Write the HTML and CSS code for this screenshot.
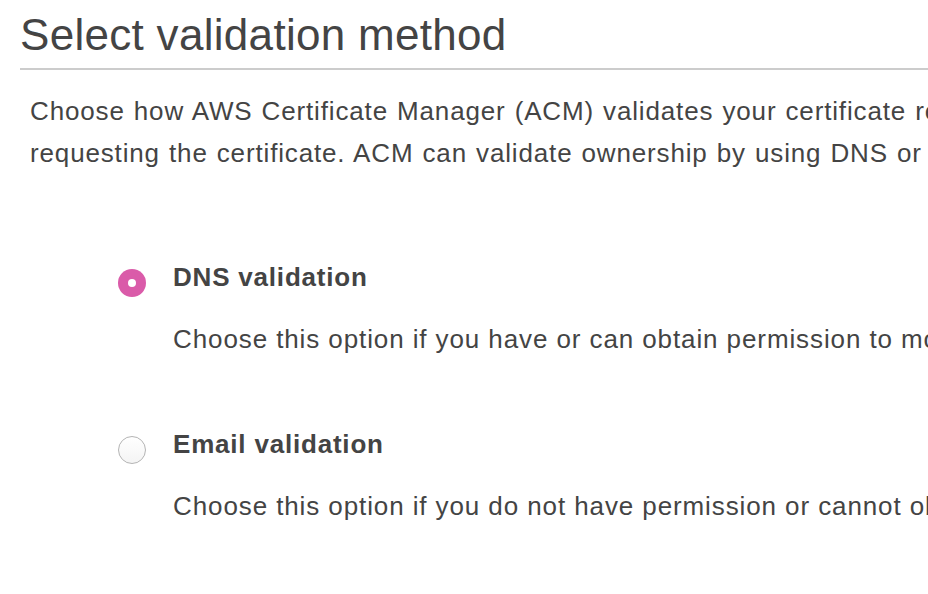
FILE: index.html
```html
<!DOCTYPE html>
<html>
<head>
<meta charset="utf-8">
<link rel="stylesheet" href="styles.css">
</head>
<body>
<div class="page">
  <h1 class="title">Select validation method</h1>
  <div class="divider"></div>
  <p class="intro">Choose how AWS Certificate Manager (ACM) validates your certificate requests. Before issuing a certificate, ACM must verify that you own or control the domains you are<br>requesting the certificate. ACM can validate ownership by using DNS or by sending email to the contact addresses of the domain owner.</p>
  <div class="options">
    <div class="option">
      <span class="radio radio-checked"><span class="dot"></span></span>
      <div class="text">
        <div class="label">DNS validation</div>
        <div class="desc">Choose this option if you have or can obtain permission to modify the DNS configuration for the domains in your certificate request.</div>
      </div>
    </div>
    <div class="option">
      <span class="radio"></span>
      <div class="text">
        <div class="label">Email validation</div>
        <div class="desc">Choose this option if you do not have permission or cannot obtain permission to modify the DNS configuration for the domains in your certificate request.</div>
      </div>
    </div>
  </div>
</div>
</body>
</html>
```
FILE: styles.css
```css
html, body {
  margin: 0;
  padding: 0;
  background: #fff;
  overflow: hidden;
}
.page {
  width: 928px;
  height: 594px;
  overflow: hidden;
  font-family: "Liberation Sans", Arial, sans-serif;
  color: #444;
  white-space: nowrap;
}
.title {
  margin: 9px 0 0 20px;
  font-size: 44px;
  line-height: 52px;
  font-weight: normal;
  letter-spacing: 0.3px;
  color: #444;
}
.divider {
  margin: 7px 0 0 20px;
  border-top: 2px solid #cccccc;
}
.intro {
  margin: 20px 0 0 30px;
  font-size: 26px;
  line-height: 42px;
  letter-spacing: 0.85px;
  word-spacing: 1px;
}
.options {
  margin: 85px 0 0 118px;
  display: flex;
  flex-direction: column;
  gap: 69px;
}
.option {
  display: flex;
  align-items: flex-start;
}
.radio {
  flex: none;
  box-sizing: border-box;
  width: 28px;
  height: 28px;
  margin-top: 10px;
  margin-right: 27px;
  border-radius: 50%;
  border: 1.5px solid #b4b4b4;
  background: linear-gradient(#ffffff, #f4f4f4);
  display: flex;
  align-items: center;
  justify-content: center;
}
.radio-checked {
  border: none;
  background: #da5ba9;
}
.dot {
  width: 8px;
  height: 8px;
  border-radius: 50%;
  background: #fff;
}
.label {
  font-size: 26px;
  line-height: 36px;
  font-weight: bold;
  letter-spacing: 0.8px;
  color: #444;
}
.desc {
  margin-top: 26px;
  font-size: 26px;
  line-height: 36px;
  letter-spacing: 0.9px;
}
```
